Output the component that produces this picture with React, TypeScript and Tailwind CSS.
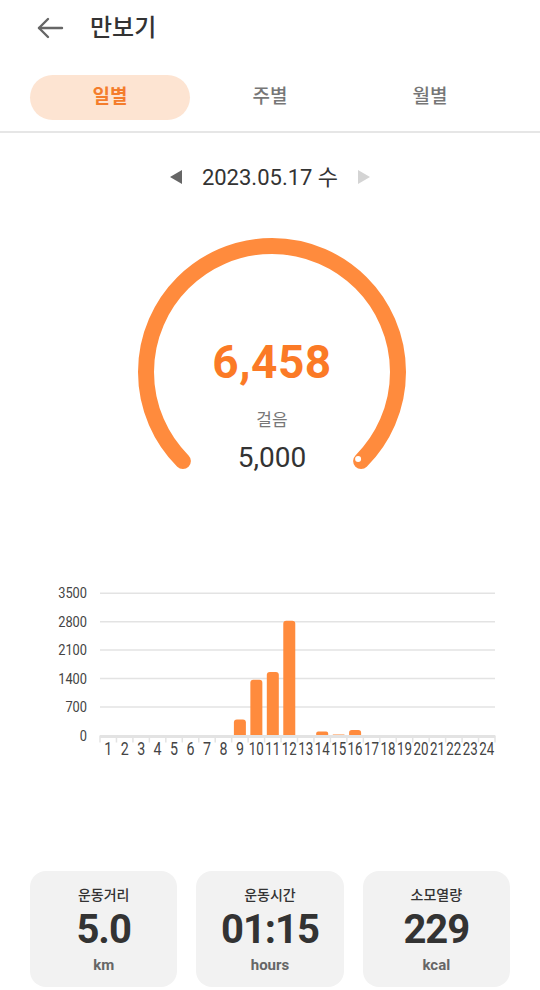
import React from "react";

const ORANGE = "#ff8b3d";
const bars: Record<number, number> = { 9: 393, 10: 1370, 11: 1566, 12: 2826, 14: 98, 15: 25, 16: 133, 18: 6 };

function Gauge() {
  const cx = 140, cy = 142, r = 126;
  const a0 = (135 * Math.PI) / 180;
  const a1 = (45 * Math.PI) / 180;
  const x0 = cx + r * Math.cos(a0), y0 = cy + r * Math.sin(a0);
  const x1 = cx + r * Math.cos(a1), y1 = cy + r * Math.sin(a1);
  const d = `M ${x0} ${y0} A ${r} ${r} 0 1 1 ${x1} ${y1}`;
  return (
    <div className="relative w-[280px] h-[245px] ml-[132px]">
      <svg className="absolute inset-0" width="280" height="245" viewBox="0 0 280 245">
        <path d={d} fill="none" stroke={ORANGE} strokeWidth="16" strokeLinecap="round" />
        <circle cx={x1 - 3} cy={y1 - 2} r="3" fill="#fff" />
      </svg>
      <div className="relative flex flex-col items-center pt-[109px]">
        <div className="text-[46px] leading-[46px] font-bold text-[#fb7a26] tracking-[0.5px]">6,458</div>
        <div className="mt-[23px] text-[17px] leading-[24px] text-[#777]">걸음</div>
        <div className="mt-[10px] text-[28px] leading-[32px] text-[#333]">5,000</div>
      </div>
    </div>
  );
}

function Chart() {
  const top = 580;
  const grid = [593.3, 621.7, 650, 678.5, 707, 735.5];
  const labels = ["3500", "2800", "2100", "1400", "700", "0"];
  const x0 = 100, x1 = 495;
  const slot = (x1 - x0) / 24;
  const base = 735.5;
  const scale = (base - 593.3) / 3500;
  return (
    <svg width="540" height="180" viewBox={`0 ${top} 540 180`} className="block">
      {grid.map((y, i) => (
        <g key={i}>
          {i < 5 && <line x1={x0} x2={x1} y1={y} y2={y} stroke="#e3e3e3" strokeWidth="1.5" />}
          <text
            x={87}
            y={y + 5}
            textAnchor="end"
            fontSize="14"
            fill="#444"
            fontFamily="Roboto, sans-serif"
            textLength={labels[i].length * 7.2}
            lengthAdjust="spacingAndGlyphs"
          >
            {labels[i]}
          </text>
        </g>
      ))}
      {Object.entries(bars).map(([h, v]) => {
        const i = Number(h) - 1;
        const bh = Math.max(v * scale, 0.6);
        const cx = x0 + slot * i + slot / 2;
        return (
          <rect key={h} x={cx - 6} y={base - bh} width="12" height={bh + 2} rx={Math.min(3, bh / 2)} fill={ORANGE} />
        );
      })}
      <line x1={x0} x2={x1} y1={base + 1} y2={base + 1} stroke="#e3e3e3" strokeWidth="3" />
      {Array.from({ length: 25 }).map((_, i) => (
        <line key={i} x1={x0 + slot * i} x2={x0 + slot * i} y1={base} y2={base + 7} stroke="#e3e3e3" strokeWidth="1.5" />
      ))}
      {Array.from({ length: 24 }).map((_, i) => {
        const s = String(i + 1);
        return (
          <text
            key={i}
            x={x0 + slot * i + slot / 2}
            y={755}
            textAnchor="middle"
            fontSize="18"
            fill="#444"
            fontFamily="Roboto, sans-serif"
            textLength={s.length === 1 ? 8 : 15}
            lengthAdjust="spacingAndGlyphs"
          >
            {s}
          </text>
        );
      })}
    </svg>
  );
}

function Card({ label, value, unit }: { label: string; value: string; unit: string }) {
  return (
    <div className="bg-[#f2f2f2] rounded-[16px] h-[116px] flex flex-col items-center pt-[14px]">
      <div className="text-[14px] leading-[20px] text-[#333] font-medium">{label}</div>
      <div className="mt-[4px] text-[40px] leading-[42px] font-bold text-[#333] tracking-[-1px]">{value}</div>
      <div className="mt-[4px] text-[15px] leading-[20px] font-bold text-[#666]">{unit}</div>
    </div>
  );
}

export default function App() {
  return (
    <div
      className="w-[540px] h-[990px] bg-white overflow-hidden"
      style={{ fontFamily: "Roboto, 'Noto Sans CJK KR', sans-serif" }}
    >
      <div className="h-[55px] flex items-center pl-[36px]">
        <svg width="28" height="24" viewBox="0 0 28 24" fill="none" stroke="#666" strokeWidth="2.4" strokeLinecap="round" strokeLinejoin="round">
          <path d="M26 12H3" />
          <path d="M12 3L3 12l9 9" />
        </svg>
        <div className="ml-[26px] text-[24px] font-medium text-[#333]">만보기</div>
      </div>
      <div className="mt-[20px] px-[30px] grid grid-cols-3 h-[45px]">
        <div className="rounded-full bg-[#fde4d2] flex items-center justify-center text-[19px] font-semibold text-[#f47d2c]">일별</div>
        <div className="flex items-center justify-center text-[19px] font-medium text-[#777]">주별</div>
        <div className="flex items-center justify-center text-[19px] font-medium text-[#777]">월별</div>
      </div>
      <div className="mt-[11px] h-[2px] bg-[#e6e6e6]" />
      <div className="mt-[29px] h-[30px] flex items-center justify-center">
        <svg width="12" height="14" viewBox="0 0 12 14"><path d="M12 0L0 7l12 7z" fill="#666" /></svg>
        <div className="mx-[20px] text-[22px] text-[#333]">2023.05.17 수</div>
        <svg width="12" height="14" viewBox="0 0 12 14"><path d="M0 0l12 7L0 14z" fill="#d4d4d4" /></svg>
      </div>
      <div className="mt-[38px]">
        <Gauge />
      </div>
      <div className="mt-[105px]">
        <Chart />
      </div>
      <div className="mt-[111px] px-[30px] grid grid-cols-3 gap-[19px]">
        <Card label="운동거리" value="5.0" unit="km" />
        <Card label="운동시간" value="01:15" unit="hours" />
        <Card label="소모열량" value="229" unit="kcal" />
      </div>
    </div>
  );
}
